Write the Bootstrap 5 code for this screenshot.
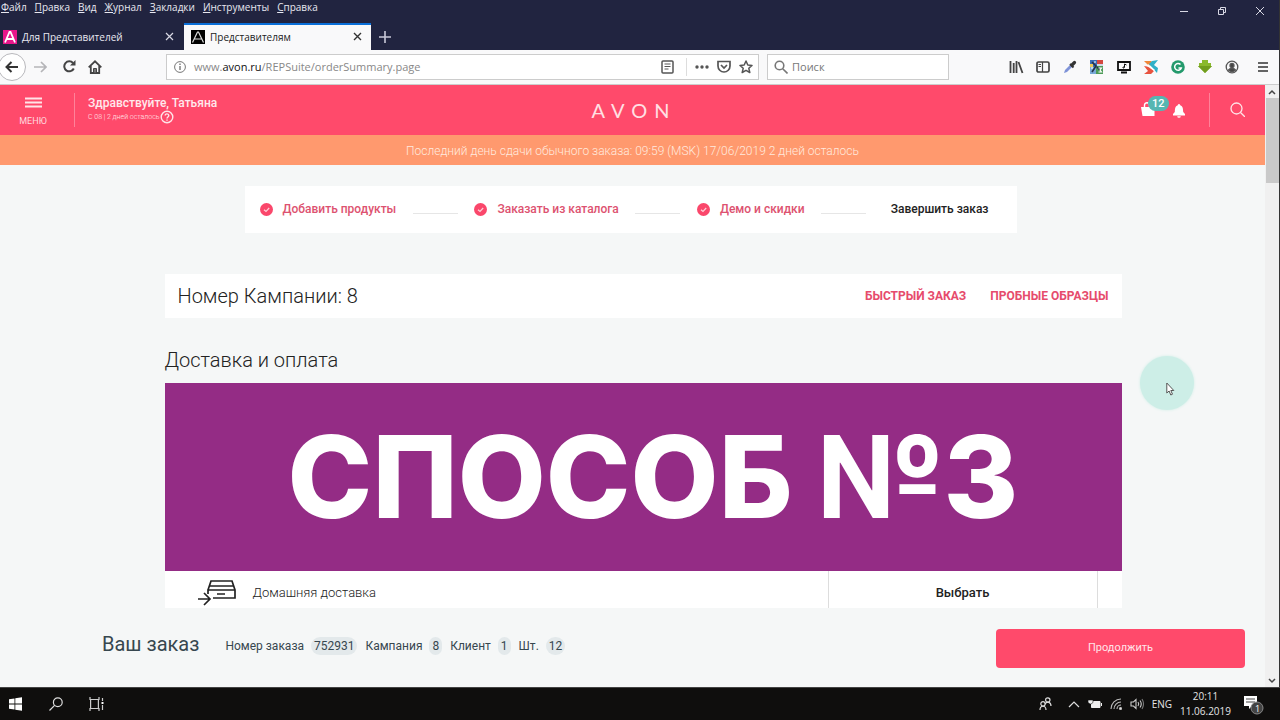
<!DOCTYPE html>
<html lang="ru">
<head>
<meta charset="utf-8">
<meta name="viewport" content="width=device-width, initial-scale=1">
<title>Представителям</title>
<link href="https://cdn.jsdelivr.net/npm/bootstrap@5.3.0/dist/css/bootstrap.min.css" rel="stylesheet">
<script src="https://cdn.jsdelivr.net/npm/bootstrap@5.3.0/dist/js/bootstrap.bundle.min.js" defer></script>
<style>
  :root { --pink: #ff4a6b; --navy: #212440; --mist: #f5f7f7; }
  body { font-family: Roboto, "Liberation Sans", sans-serif; font-size: 13px; line-height: 16px; color: #222; background: #000; }
  svg { display: block; flex: none; }
  a { color: inherit; text-decoration: none; }
  button { color: inherit; }
  .plain { border: 0; background: none; padding: 0; }
  .desktop { height: 100vh; }
  .win { border-right: 1px solid #333; }

  .chrome-top { background: var(--navy); color: #e8e8f0; font-family: "Open Sans", "Noto Sans", sans-serif; font-size: 10px; }
  .menus { gap: 8px; padding-left: 1px; line-height: 14px; height: 23px; }
  .win-btns { gap: 28px; padding: 6px 14px 0 0; }
  .tabs { height: 27px; }
  .tab-item { height: 27px; width: 184px; padding: 0 10px 0 3px; gap: 5px; }
  .tab-item.current { background: #f9f9fa; color: #222; border-top: 2px solid #0a6fd8; width: 187px; padding: 0 9px 2px 7px; }
  .toolbar { background: #f9f9fa; height: 35px; border-bottom: 1px solid #ccc; padding: 0 10px 0 0; font-family: "Open Sans", "Noto Sans", sans-serif; color: #444; }
  .back { width: 28px; height: 28px; border: 1px solid #b8b8bc; border-radius: 50%; background: #fff; margin-left: -2px; }
  .field { height: 26px; border: 1px solid #ccc; background: #fff; font-size: 11px; }
  .field input { border: 0; outline: 0; background: none; min-width: 0; padding: 0; color: #777; }
  .field input::placeholder { color: #777; opacity: 1; }
  .url { width: 593px; margin-left: 64px; padding: 0 5px 0 7px; color: #888; }
  .url b { font-weight: 400; color: #111; }
  .url-sep { width: 1px; height: 18px; background: #ddd; margin: 0 8px 0 12px; }
  .finder { width: 182px; margin-left: 8px; padding: 0 6px; }
  .ext { gap: 11px; }
  .app-menu { margin-left: 6px; }

  .site { background: var(--mist); }
  .site-head { background: var(--pink); color: #fff; height: 50px; }
  .side { flex: 1 1 0; }
  .menu-btn { width: 66px; font-size: 9px; line-height: 12px; color: #ffd9df; gap: 7px; }
  .rule-v { width: 1px; height: 34px; background: #ff8299; }
  .hello { font-size: 12px; line-height: 14px; padding-left: 13px; font-weight: 500; color: #ffe8ec; }
  .hello small { font-size: 7px; line-height: 14px; font-weight: 300; }
  .brand { font-family: Lato, sans-serif; font-size: 20px; line-height: 24px; letter-spacing: 7px; padding-left: 3px; color: #ffe0e4; }
  .bag { width: 32px; }
  .bag .count { left: 7px; top: -6px; background: #56b6b2; font-size: 11px; line-height: 15px; padding: 0 4px; font-weight: 500; }
  .notice { background: #ff996e; color: #ffeadf; font-weight: 300; height: 30px; padding-top: 2px; font-size: 12px; }
  .steps { width: 772px; height: 47px; margin: 21px 0 0 calc(50% - 388px); padding: 0 28px 0 15px; background: #fff; font-size: 12px; font-weight: 500; }
  .step { color: #dd5270; gap: 10px; }
  .step.now { color: #222; }
  .dash { height: 1px; width: 45px; background: #e6e6e6; margin-top: 8px; }
  .sheet { width: 957px; margin-left: calc(50% - 468px); }
  .campaign { background: #fff; height: 44px; margin-top: 41px; padding: 0 13px; }
  .title-l { font-size: 20px; line-height: 24px; font-weight: 300; margin: 0; }
  .delivery { margin-top: 30px; }
  .campaign a { color: #e64b6c; font-size: 12px; font-weight: 700; }
  .promo { background: #942c85; color: #fff; height: 188px; margin-top: 11px; padding-left: 20px; font-family: Inter, Roboto, sans-serif; font-weight: 800; font-size: 114px; line-height: 188px; }
  .option { background: #fff; height: 44px; }
  .option label { font-size: 13px; font-weight: 300; }
  .choose { width: 270px; margin-right: 24px; border: solid #ddd; border-width: 0 1px; font-weight: 500; font-size: 13px; }
  .order { background: var(--mist); height: 79px; padding: 0 20px 3px 102px; font-size: 12px; color: #37474f; }
  .order h2 { font-size: 20px; line-height: 24px; font-weight: 400; margin: 0 26px 4px 0; }
  .pill { background: #e3e9eb; border-radius: 10px; padding: 2px 3px; line-height: 16px; margin-left: 4px; }
  .go { background: var(--pink); color: #ffe4e8; width: 249px; height: 39px; margin-top: 4px; border-radius: 4px; font-size: 11px; }
  .scroller { width: 14px; background: #f0f0f0; padding: 4px 0 3px; }
  .thumb { width: 13px; height: 85px; background: #c9c9c9; margin-top: 3px; }

  .taskbar { height: 33px; background: #0f0e0d; color: #e4e4e4; font-family: "Open Sans", "Noto Sans", sans-serif; font-size: 10px; line-height: 15px; border-top: 1px solid #444; }
  .launch { gap: 26px; }
  .tray { gap: 8px; }
  .pointer { right: 86px; top: 356px; width: 54px; height: 54px; border-radius: 50%; background: #cdeee7; box-shadow: 0 0 3px #cdeee7; }
  .pointer svg { margin: 26px 0 0 26px; }
</style>
</head>
<body>
<div class="desktop d-flex flex-column position-relative overflow-hidden">
 <div class="win d-flex flex-column flex-fill overflow-hidden">
  <header class="chrome-top">
    <div class="d-flex justify-content-between">
      <nav class="menus d-flex" aria-label="Меню браузера">
        <a href="#"><u>Ф</u>айл</a><a href="#"><u>П</u>равка</a><a href="#"><u>В</u>ид</a><a href="#"><u>Ж</u>урнал</a><a href="#"><u>З</u>акладки</a><a href="#"><u>И</u>нструменты</a><a href="#"><u>С</u>правка</a>
      </nav>
      <div class="win-btns d-flex align-items-start">
        <button class="plain" aria-label="Свернуть"><svg width="10" height="10" stroke="#d8d8e4"><path d="M1 5.500h8"/></svg></button>
        <button class="plain" aria-label="Развернуть"><svg width="10" height="10" fill="none" stroke="#d8d8e4"><path d="M1.500 3.500h5v5h-5zM3.500 3V1.500h5v5H7"/></svg></button>
        <button class="plain" aria-label="Закрыть"><svg width="10" height="10" stroke="#d8d8e4"><path d="M1 1l8 8M9 1l-8 8"/></svg></button>
      </div>
    </div>
    <div class="tabs d-flex align-items-center">
      <div class="tab-item d-flex align-items-center">
        <svg width="14" height="14"><path fill="#e8168b" d="M0 0h14v14H0z"/><path d="M2 12.500L6.500 2h1L12 12.500M3.800 9h6.400" fill="none" stroke="#fff" stroke-width="1.800"/></svg>
        <a href="#" class="flex-fill">Для Представителей</a>
        <button class="plain" aria-label="Закрыть вкладку"><svg width="9" height="9" stroke="#d8d8e4" stroke-width="1.200"><path d="M1 1l7 7M8 1l-7 7"/></svg></button>
      </div>
      <div class="tab-item current d-flex align-items-center">
        <svg width="14" height="14"><path d="M0 0h14v14H0z"/><path d="M1.500 12.500L6.500 2h1l5 10.500M3.500 9h7" fill="none" stroke="#ddd" stroke-width="1.200"/></svg>
        <a href="#" class="flex-fill">Представителям</a>
        <button class="plain" aria-label="Закрыть вкладку"><svg width="9" height="9" stroke="#333" stroke-width="1.400"><path d="M1 1l7 7M8 1l-7 7"/></svg></button>
      </div>
      <button class="plain ps-2" aria-label="Новая вкладка"><svg width="12" height="12" stroke="#c8c8d8" stroke-width="1.600"><path d="M6 0v12M0 6h12"/></svg></button>
    </div>
  </header>

  <div class="toolbar d-flex align-items-center">
    <button class="plain back d-flex align-items-center justify-content-center" aria-label="Назад"><svg width="14" height="12" fill="none" stroke="#333" stroke-width="2"><path d="M13 6H2M6.500 1L1.500 6l5 5"/></svg></button>
    <button class="plain ms-2" aria-label="Вперёд"><svg width="13" height="12" fill="none" stroke="#b5b5b8" stroke-width="1.700"><path d="M0 6h12M7 1l5 5-5 5"/></svg></button>
    <button class="plain ms-3 pe-1" aria-label="Обновить"><svg width="13" height="13" fill="none" stroke="#444" stroke-width="2"><path d="M10.800 8.500A5 5 0 1 1 10 3"/><path d="M12.500 0v5.500H7z" fill="#444" stroke="none"/></svg></button>
    <button class="plain ms-2" aria-label="Домой"><svg width="14" height="14" fill="none" stroke="#444" stroke-width="1.800"><path d="M.7 7.300L7 1.300l6.300 6M2.800 6v7h8.400V6"/><path d="M5.500 8.500h3V13h-3z" fill="#777" stroke="#444" stroke-width="1"/></svg></button>
    <div class="field url d-flex align-items-center">
      <svg width="12" height="12" fill="none" stroke="#777"><circle cx="6" cy="6" r="5.400"/><path d="M6 5v4M6 2.500V4" stroke-width="1.400"/></svg>
      <a href="#" class="flex-fill ms-2">www.<b>avon.ru</b>/REPSuite/orderSummary.page</a>
      <svg width="13" height="14" fill="none" stroke="#555" stroke-width="1.500"><rect x="1" y="1" width="11" height="12" rx="1"/><path d="M3.500 4h6M3.500 6.500h6M3.500 9h4" stroke-width="1"/></svg>
      <span class="url-sep"></span>
      <svg width="14" height="14" fill="#555"><circle cx="2" cy="7" r="1.700"/><circle cx="7" cy="7" r="1.700"/><circle cx="12" cy="7" r="1.700"/></svg>
      <svg class="ms-2 me-2" width="14" height="13" fill="none" stroke="#555" stroke-width="1.700"><path d="M1 1.500h12V6a6 6 0 0 1-12 0zM4 5l3 3 3-3"/></svg>
      <svg width="14" height="14" fill="none" stroke="#555" stroke-width="1.500" stroke-linejoin="round"><path d="M7 1l1.800 4 4.200.4-3.200 2.900 1 4.200L7 10.300l-3.800 2.200 1-4.200L1 5.400 5.200 5z"/></svg>
    </div>
    <div class="field finder d-flex align-items-center">
      <svg width="14" height="14" fill="none" stroke="#777" stroke-width="1.600"><circle cx="5.500" cy="5.500" r="4.300"/><path d="M8.700 8.700L13.500 13.500"/></svg>
      <input class="flex-fill ms-1" type="search" placeholder="Поиск" aria-label="Поиск">
    </div>
    <div class="ext d-flex align-items-center ms-auto">
      <svg width="16" height="14" stroke="#444" stroke-width="1.800"><path d="M2.500 1v12M5.700 3v10M8.500 1v12M10.500 2l4 11"/></svg>
      <svg width="16" height="14" fill="none" stroke="#444" stroke-width="1.700"><rect x="2" y="2" width="12" height="10" rx="1.500"/><path d="M7.500 2v10M3.500 4.500H6M3.500 6.500H6" stroke-width="1.200"/></svg>
      <svg width="16" height="14"><path d="M2 13l1-3 5-5 2 2-5 5z" fill="#7f93d8"/><path d="M8 4l3.500 3.500" stroke="#333" stroke-width="2"/><path d="M10 5l2.500-2.500" stroke="#333" stroke-width="3.200" stroke-linecap="round"/></svg>
      <svg width="16" height="14"><path fill="#3b6fb8" d="M1 0h7v7H1z"/><path fill="#d4483f" d="M8 0h6v4H8z"/><path fill="#79a9d8" d="M1 7h6v7H1z"/><path fill="#4c9b57" d="M7 6h7v8H7z"/><path fill="#e9c85a" d="M1 4h3v3H1z"/><path fill="#cfd8e6" d="M8 4h6v2H8z"/><path d="M3 2l4 4-4 6M8 7l3 3" fill="none" stroke="#26324a" stroke-width="1.600"/><path d="M5 2h2M2 8h2M9.500 8h3l-1.500 2 1.500 2h-3" fill="none" stroke="#fff" stroke-width="1.200"/></svg>
      <svg width="16" height="14" fill="none" stroke="#111" stroke-width="1.800"><path d="M2 2h12v8H2zM5 12.500h6"/><path d="M8.500 7.500V4l2 1" stroke-width="1"/><circle cx="7.500" cy="7.500" r=".6" stroke-width="1"/></svg>
      <svg width="16" height="14"><path d="M1 1h7l3 3-5 2z" fill="#f0883a"/><path d="M15 0L9 1 6 4l8 9 1-5-4-3z" fill="#2fb0c8"/><path d="M1 6l6 1 4 4-3 3-7 0 4-3z" fill="#e8533f"/><path d="M5 4l7 6-1 1-7-5z" fill="#fff"/></svg>
      <svg width="16" height="14"><circle cx="8" cy="7" r="6.800" fill="#249a6c"/><path d="M10.500 4.500A3.400 3.400 0 1 0 11.300 8H8.500" fill="none" stroke="#fff" stroke-width="1.500"/></svg>
      <svg width="16" height="14"><path d="M5 0h6v3h3v3h1l-7 7-7-7h1V3h3z" fill="#8ab92d"/><path d="M1 6h14l-7 7z" fill="#719d1e"/></svg>
      <svg width="16" height="14" fill="none" stroke="#555" stroke-width="1.300"><circle cx="8" cy="7" r="5.800"/><circle cx="8" cy="5.500" r="2" fill="#444"/><path d="M4.500 10c1-2 6-2 7 0-2 2-5 2-7 0z" fill="#444"/></svg>
      <button class="plain app-menu" aria-label="Открыть меню"><svg width="12" height="12" stroke="#333" stroke-width="1.700"><path d="M1 2h10M1 6h10M1 10h10"/></svg></button>
    </div>
  </div>

  <div class="d-flex flex-fill overflow-hidden">
   <div class="site d-flex flex-column flex-fill overflow-hidden">
    <div class="site-head d-flex align-items-center flex-shrink-0">
      <div class="side d-flex align-items-center">
        <button class="plain menu-btn d-flex flex-column align-items-center pt-1"><svg width="17" height="11" stroke="#ffe4e8" stroke-width="2"><path d="M0 1.500h17M0 5.500h17M0 9.500h17"/></svg>МЕНЮ</button>
        <span class="rule-v ms-2"></span>
        <div class="hello">Здравствуйте, Татьяна
          <div class="d-flex align-items-center"><small>С 08 | 2 дней осталось</small><a href="#" aria-label="Справка"><svg width="14" height="14" fill="none" stroke="#ffe4e8" stroke-width="1.400"><circle cx="7" cy="7" r="5.800"/><path d="M5.200 5.600c0-2.400 3.600-2.200 3.600 0C8.800 7 7 6.900 7 8.400M7 9.500v1.300"/></svg></a></div>
        </div>
      </div>
      <a href="#" class="brand">AVON</a>
      <div class="side d-flex align-items-center justify-content-end">
        <a href="#" class="bag position-relative" aria-label="Корзина"><svg width="14" height="15"><path d="M0 5h11l2.500-1L13.500 14H1.500z" fill="#fff"/><path d="M3.500 6V3c0-3 5-3 5 0v2" fill="none" stroke="#fff" stroke-width="1.400"/></svg><span class="count badge rounded-pill position-absolute">12</span></a>
        <a href="#" aria-label="Уведомления"><svg class="mt-1" width="12" height="15" fill="#fff"><path d="M6 0c1 0 1.200.8 1.200 1.300C10 2.200 10 5 10.200 8l1.800 2v1.500H0V10l1.800-2C2 5 2 2.200 4.800 1.300 4.800.8 5 0 6 0zM4.200 12.200h3.600a1.800 1.600 0 0 1-3.600 0z"/></svg></a>
        <span class="rule-v ms-4 me-3"></span>
        <a href="#" class="me-3 pe-1" aria-label="Поиск"><svg class="ms-1" width="15" height="15" fill="none" stroke="#ffe4e8" stroke-width="1.300"><circle cx="6.500" cy="6.500" r="5.500"/><path d="M10.500 10.500L15 15"/></svg></a>
      </div>
    </div>
    <div class="notice d-flex align-items-center justify-content-center flex-shrink-0">Последний день сдачи обычного заказа: 09:59 (MSK) 17/06/2019 2 дней осталось</div>

    <main class="flex-fill overflow-hidden">
      <nav class="steps d-flex align-items-center justify-content-between" aria-label="Шаги заказа">
        <a href="#" class="step d-flex align-items-center"><svg width="13" height="13"><circle cx="6.500" cy="6.500" r="6.500" fill="#fa476b"/><path d="M4 6.700l2 1.800 3.200-3.500" fill="none" stroke="#ffd0d8" stroke-width="1.200"/></svg>Добавить продукты</a>
        <span class="dash"></span>
        <a href="#" class="step d-flex align-items-center"><svg width="13" height="13"><circle cx="6.500" cy="6.500" r="6.500" fill="#fa476b"/><path d="M4 6.700l2 1.800 3.200-3.500" fill="none" stroke="#ffd0d8" stroke-width="1.200"/></svg>Заказать из каталога</a>
        <span class="dash"></span>
        <a href="#" class="step d-flex align-items-center"><svg width="13" height="13"><circle cx="6.500" cy="6.500" r="6.500" fill="#fa476b"/><path d="M4 6.700l2 1.800 3.200-3.500" fill="none" stroke="#ffd0d8" stroke-width="1.200"/></svg>Демо и скидки</a>
        <span class="dash me-2"></span>
        <a href="#" class="step now">Завершить заказ</a>
      </nav>
      <div class="sheet">
        <section class="campaign d-flex align-items-center">
          <h1 class="title-l me-auto">Номер Кампании: 8</h1>
          <a href="#" class="me-4">БЫСТРЫЙ ЗАКАЗ</a><a href="#">ПРОБНЫЕ ОБРАЗЦЫ</a>
        </section>
        <h2 class="title-l delivery">Доставка и оплата</h2>
        <div class="promo text-center text-nowrap">СПОСОБ №3</div>
        <div class="option d-flex align-items-center">
          <svg class="ms-4" width="60" height="34" fill="none" stroke="#222" stroke-width="1.700"><path d="M19 14L22 5h21l3 9v8H24M19 18v-4h27M21 10h23M28 18h8M9 23h12M15 17l6 6-6 6"/></svg>
          <label for="home-delivery" class="me-auto ms-1">Домашняя доставка</label>
          <button id="home-delivery" class="plain choose align-self-stretch">Выбрать</button>
        </div>
      </div>
    </main>

    <footer class="order d-flex align-items-center flex-shrink-0">
      <h2>Ваш заказ</h2>
      <span>Номер заказа <span class="pill">752931</span></span>
      <span class="ms-2">Кампания <span class="pill">8</span></span>
      <span class="ms-2">Клиент <span class="pill">1</span></span>
      <span class="ms-2">Шт. <span class="pill">12</span></span>
      <button class="plain go ms-auto">Продолжить</button>
    </footer>
   </div>
   <div class="scroller d-flex flex-column align-items-center">
     <svg width="8" height="6" fill="none" stroke="#444" stroke-width="1.500"><path d="M1 5l3-3 3 3"/></svg>
     <div class="thumb"></div>
     <svg class="mt-auto" width="8" height="6" fill="none" stroke="#444" stroke-width="1.500"><path d="M1 1l3 3 3-3"/></svg>
   </div>
  </div>
 </div>

  <div class="taskbar d-flex align-items-center flex-shrink-0">
    <div class="launch d-flex align-items-center ms-2">
      <button class="plain" aria-label="Пуск"><svg width="15" height="14" fill="#fff"><path d="M1 2.200l5.500-.8v5.200H1zM7.300 1.300L14 .3v6.300H7.300zM1 7.400h5.500v5.200L1 11.800zM7.300 7.400H14v6.300l-6.700-1z"/></svg></button>
      <button class="plain" aria-label="Найти"><svg width="14" height="14" fill="none" stroke="#ddd" stroke-width="1.200"><circle cx="8.800" cy="5.200" r="4.400"/><path d="M5.600 8.400L.5 13.500"/></svg></button>
      <button class="plain" aria-label="Представление задач"><svg width="15" height="14" fill="none" stroke="#ccc" stroke-width="1.200"><path d="M1 0v2.500h9V0M1 14v-2.500h9V14M1.600 2.500v9M9.400 2.500v9M13.500 1v3M13.500 8v5"/><path d="M12.500 6h2" stroke="#fff" stroke-width="2"/></svg></button>
    </div>
    <div class="tray d-flex align-items-center ms-auto">
      <svg class="me-2" width="13" height="14" fill="none" stroke="#ddd" stroke-width="1.200"><circle cx="8.800" cy="3" r="2.200"/><circle cx="4" cy="6.800" r="2.200"/><path d="M1 13c0-5 6-5 6 0M6 7c2-3 6-2 6 2"/></svg>
      <svg width="12" height="10" fill="none" stroke="#ddd" stroke-width="1.200"><path d="M1 8l5-5 5 5"/></svg>
      <svg width="14" height="10"><path d="M3.500 2.500H12v6H3.500z" fill="#eee" stroke="#eee"/><path d="M13.500 4v3" stroke="#eee"/><path d="M0 1h5v2.500L3 5H2L0 3.500z" fill="#eee" stroke="#111" stroke-width=".6"/></svg>
      <svg width="12" height="12" fill="none" stroke="#bbb" stroke-width="1.100"><path d="M1 11A10 10 0 0 1 11 1M4 11a7 7 0 0 1 7-7M7 11a4 4 0 0 1 4-4"/><circle cx="10.500" cy="10.500" r="1" fill="#fff"/></svg>
      <svg width="14" height="12" fill="none" stroke="#ccc" stroke-width="1.100"><path d="M1 4h2.500L6 1.500v9L3.500 8H1zM8 4q1.500 2 0 4M10 2.500q2.500 3.500 0 7"/><path d="M12 1q3 5 0 10" stroke="#777"/></svg>
      <span>ENG</span>
      <span class="text-center">20:11<br>11.06.2019</span>
      <div class="ms-1 me-3"><svg width="21" height="21"><path d="M1 2h13v10H9l-3 3v-3H1z" fill="#fff"/><path d="M3 5h9M3 8h9" stroke="#444"/><circle cx="14" cy="14" r="6" fill="#444" stroke="#888"/><text x="12" y="18" font-size="9" fill="#fff">1</text></svg></div>
    </div>
  </div>
  <div class="pointer position-absolute"><svg width="9" height="14" fill="#fff" stroke="#555"><path d="M.8 1v10l2.300-2 1.700 4 1.700-.8-1.700-3.700h3z"/></svg></div>
</div>
</body>
</html>
